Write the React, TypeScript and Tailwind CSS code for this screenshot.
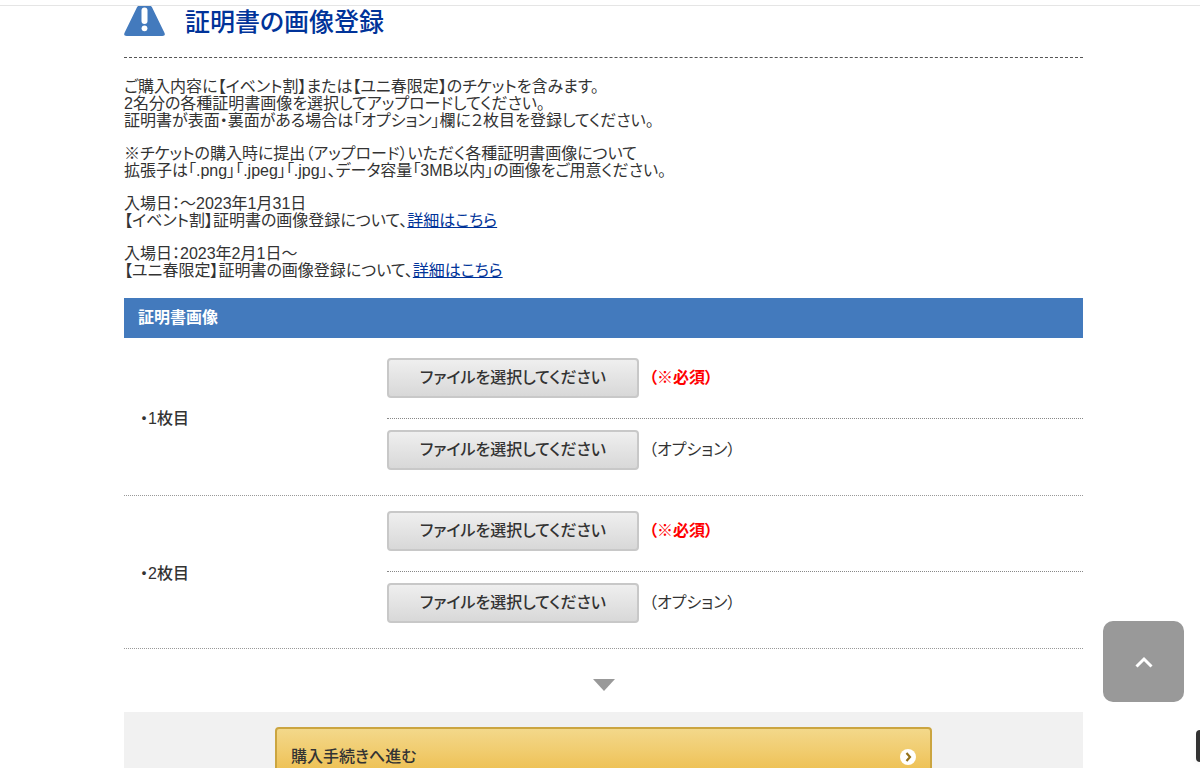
interface IUpload {
  label: string
  required: boolean
}

interface ITicket {
  name: string
  className: string
}

const uploads: IUpload[] = [
  { label: "（※必須）", required: true },
  { label: "（オプション）", required: false },
]

const tickets: ITicket[] = [
  { name: "・1枚目", className: "pt-5" },
  { name: "・2枚目", className: "pt-[15px]" },
]

function WarningIcon() {
  return (
    <svg className="w-[41px] h-[31px]" viewBox="0 0 41 31" aria-hidden="true">
      <path
        d="M15 0h11c1 0 1.500.5 2 1.300L40.300 26.500c1.200 2.300.3 3.500-2 3.500H2.700c-2.300 0-3.200-1.200-2-3.500L13 1.300C13.500.5 14 0 15 0z"
        fill="#437abd"
      />
      <path
        d="M17.500 4.500a3 3 0 0 1 6 0v10.500a3 3 0 0 1-6 0z"
        fill="#fff"
      />
      <circle cx="20.500" cy="22.300" r="2.900" fill="#fff" />
    </svg>
  )
}

function UploadRow({ label, required }: IUpload) {
  return (
    <div className="flex items-center">
      <button
        type="button"
        className="w-[252px] h-10 rounded border-2 border-[#c8c8c8] bg-linear-to-b from-[#efefef] to-[#d8d8d8] font-medium"
      >
        ファイルを選択してください
      </button>
      <span className={required ? "ml-2.5 font-bold text-[#ff0000]" : "ml-2.5"}>
        {label}
      </span>
    </div>
  )
}

function TicketSection({ name, className }: ITicket) {
  return (
    <section className="flex items-center border-b border-dotted border-[#999]">
      <h3 className="w-[263px] pt-1 pl-4 font-medium">{name}</h3>
      <div className={"flex-1 pb-[25px] " + className}>
        <div className="pb-5 border-b border-dotted border-[#888]">
          <UploadRow {...uploads[0]} />
        </div>
        <div className="pt-[11px]">
          <UploadRow {...uploads[1]} />
        </div>
      </div>
    </section>
  )
}

function App() {
  return (
    <div className="bg-white text-base text-[#333] font-['Liberation_Sans','Noto_Sans_CJK_JP',sans-serif] [font-feature-settings:'palt']">
      <header className="h-[6px] border-b border-[#e5e5e5]" />

      <main className="pl-[124px] pr-[117px]">
        <div className="flex items-center gap-5 h-[52px] pb-5 border-b border-dashed border-[#555]">
          <WarningIcon />
          <h1 className="text-[25px] leading-8 font-medium text-[#003399]">
            証明書の画像登録
          </h1>
        </div>

        <div className="flex flex-col gap-4 pt-5 pb-[19px] leading-[17px]">
          <p>
            ご購入内容に【イベント割】または【ユニ春限定】のチケットを含みます。
            <br />
            2名分の各種証明書画像を選択してアップロードしてください。
            <br />
            証明書が表面・裏面がある場合は「オプション」欄に２枚目を登録してください。
          </p>
          <p>
            ※チケットの購入時に提出（アップロード）いただく各種証明書画像について
            <br />
            拡張子は「.png」「.jpeg」「.jpg」、データ容量「3MB以内」の画像をご用意ください。
          </p>
          <p>
            入場日：～2023年1月31日
            <br />
            【イベント割】証明書の画像登録について、
            <a href="#event" className="text-[#003399] underline">
              詳細はこちら
            </a>
          </p>
          <p>
            入場日：2023年2月1日～
            <br />
            【ユニ春限定】証明書の画像登録について、
            <a href="#unispring" className="text-[#003399] underline">
              詳細はこちら
            </a>
          </p>
        </div>

        <h2 className="flex items-center h-10 px-3.5 bg-[#437abd] font-bold text-white">
          証明書画像
        </h2>

        {tickets.map((ticket) => (
          <TicketSection key={ticket.name} {...ticket} />
        ))}

        <svg
          className="w-[22px] h-3 mx-auto mt-[30px] mb-[21px]"
          viewBox="0 0 22 12"
          aria-hidden="true"
        >
          <path d="M0 0h22L11 12z" fill="#999" />
        </svg>

        <div className="px-[151px] py-[15px] bg-[#f1f1f1]">
          <button
            type="submit"
            className="flex items-center justify-between w-full h-[60px] px-3.5 rounded border-2 border-[#cba540] bg-linear-to-b from-[#f3d88a] to-[#ecb93a] font-medium"
          >
            購入手続きへ進む
            <svg className="size-4" viewBox="0 0 16 16" aria-hidden="true">
              <circle cx="8" cy="8" r="8" fill="#fff" />
              <path
                d="M6.500 4l3.500 4-3.500 4"
                fill="none"
                stroke="#94711b"
                strokeWidth="2.200"
              />
            </svg>
          </button>
        </div>
      </main>

      <button
        type="button"
        aria-label="ページの先頭へ"
        className="fixed right-4 bottom-[66px] flex items-center justify-center size-[81px] rounded-[10px] bg-[#999]"
      >
        <svg className="w-[18px] h-3" viewBox="0 0 18 12" aria-hidden="true">
          <path
            d="M1.500 10.500L9 3l7.500 7.500"
            fill="none"
            stroke="#fff"
            strokeWidth="3"
          />
        </svg>
      </button>
      <div className="fixed right-0 bottom-1.5 w-1 h-8 rounded-l bg-[#333] shadow-md" />
    </div>
  )
}

export default App
